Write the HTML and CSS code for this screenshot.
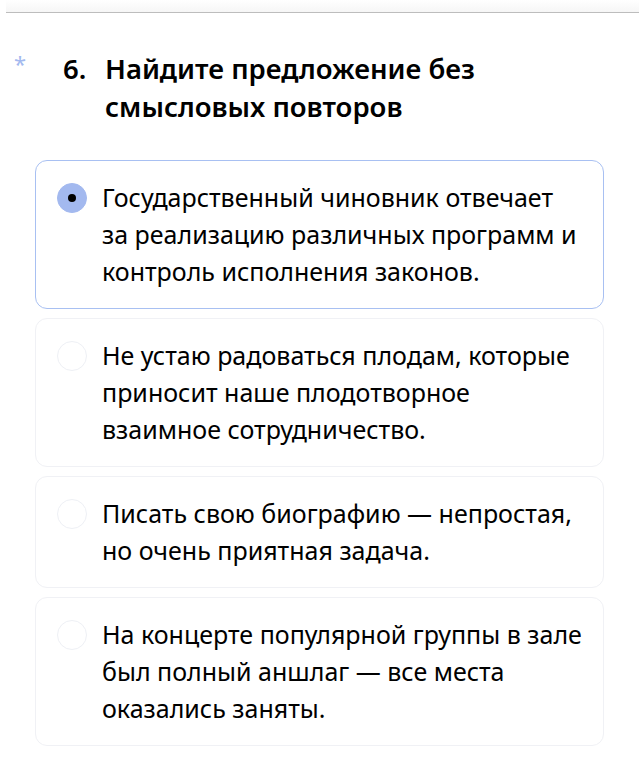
FILE: index.html
```html
<!DOCTYPE html>
<html lang="ru">
<head>
  <meta charset="UTF-8">
  <meta name="viewport" content="width=device-width, initial-scale=1.0">
  <title>Вопрос 6</title>
  <link rel="stylesheet" href="styles.css">
</head>
<body>
  <div class="topbar"></div>

  <div class="question">
    <div class="question-head">
      <span class="required">*</span>
      <span class="number">6.</span>
      <h2 class="title">Найдите предложение без смысловых повторов</h2>
    </div>

    <div class="options">
      <label class="option selected">
        <span class="radio"></span>
        <span class="option-text">Государственный чиновник отвечает за реализацию различных программ и контроль исполнения законов.</span>
      </label>
      <label class="option">
        <span class="radio"></span>
        <span class="option-text">Не устаю радоваться плодам, которые приносит наше плодотворное взаимное сотрудничество.</span>
      </label>
      <label class="option">
        <span class="radio"></span>
        <span class="option-text">Писать свою биографию — непростая, но очень приятная задача.</span>
      </label>
      <label class="option">
        <span class="radio"></span>
        <span class="option-text">На концерте популярной группы в зале был полный аншлаг — все места оказались заняты.</span>
      </label>
    </div>
  </div>
</body>
</html>
```

FILE: styles.css
```css
body {
  margin: 0;
  background: #ffffff;
  font-family: "Noto Sans", "Open Sans", sans-serif;
  color: #000000;
}

.topbar {
  height: 12px;
  margin-left: 6px;
  background: linear-gradient(to bottom, #ffffff, #f6f6f6);
  border-bottom: 1px solid #bdbdbd;
  box-shadow: 0 12px 16px -8px rgba(0, 0, 0, 0.05);
}

.question {
  padding: 37px 35px 0 35px;
}

.question-head {
  position: relative;
  display: flex;
  align-items: flex-start;
}

.required {
  position: absolute;
  left: -21px;
  top: 2px;
  font-size: 22px;
  line-height: 22px;
  color: #a3b9ef;
}

.number {
  width: 42px;
  padding-left: 28px;
  font-size: 27.5px;
  font-weight: 600;
  line-height: 38px;
}

.title {
  margin: 0;
  width: 440px;
  font-size: 27.5px;
  font-weight: 600;
  line-height: 38px;
}

.options {
  margin-top: 34px;
  display: flex;
  flex-direction: column;
  gap: 9px;
}

.option {
  display: flex;
  align-items: flex-start;
  gap: 15px;
  padding: 18px 20px 18px 21px;
  border: 1px solid #f0f1f5;
  border-radius: 12px;
  cursor: pointer;
}

.option.selected {
  border-color: #a8c0f2;
}

.radio {
  flex: none;
  width: 30px;
  height: 30px;
  margin-top: 4px;
  border-radius: 50%;
  border: 1px solid #eef0f5;
  box-sizing: border-box;
  display: flex;
  align-items: center;
  justify-content: center;
}

.option.selected .radio {
  background: #a3b9ef;
  border-color: #a3b9ef;
}

.option.selected .radio::after {
  content: "";
  width: 8px;
  height: 8px;
  border-radius: 50%;
  background: #000000;
}

.option-text {
  font-size: 25px;
  line-height: 37px;
}
```
